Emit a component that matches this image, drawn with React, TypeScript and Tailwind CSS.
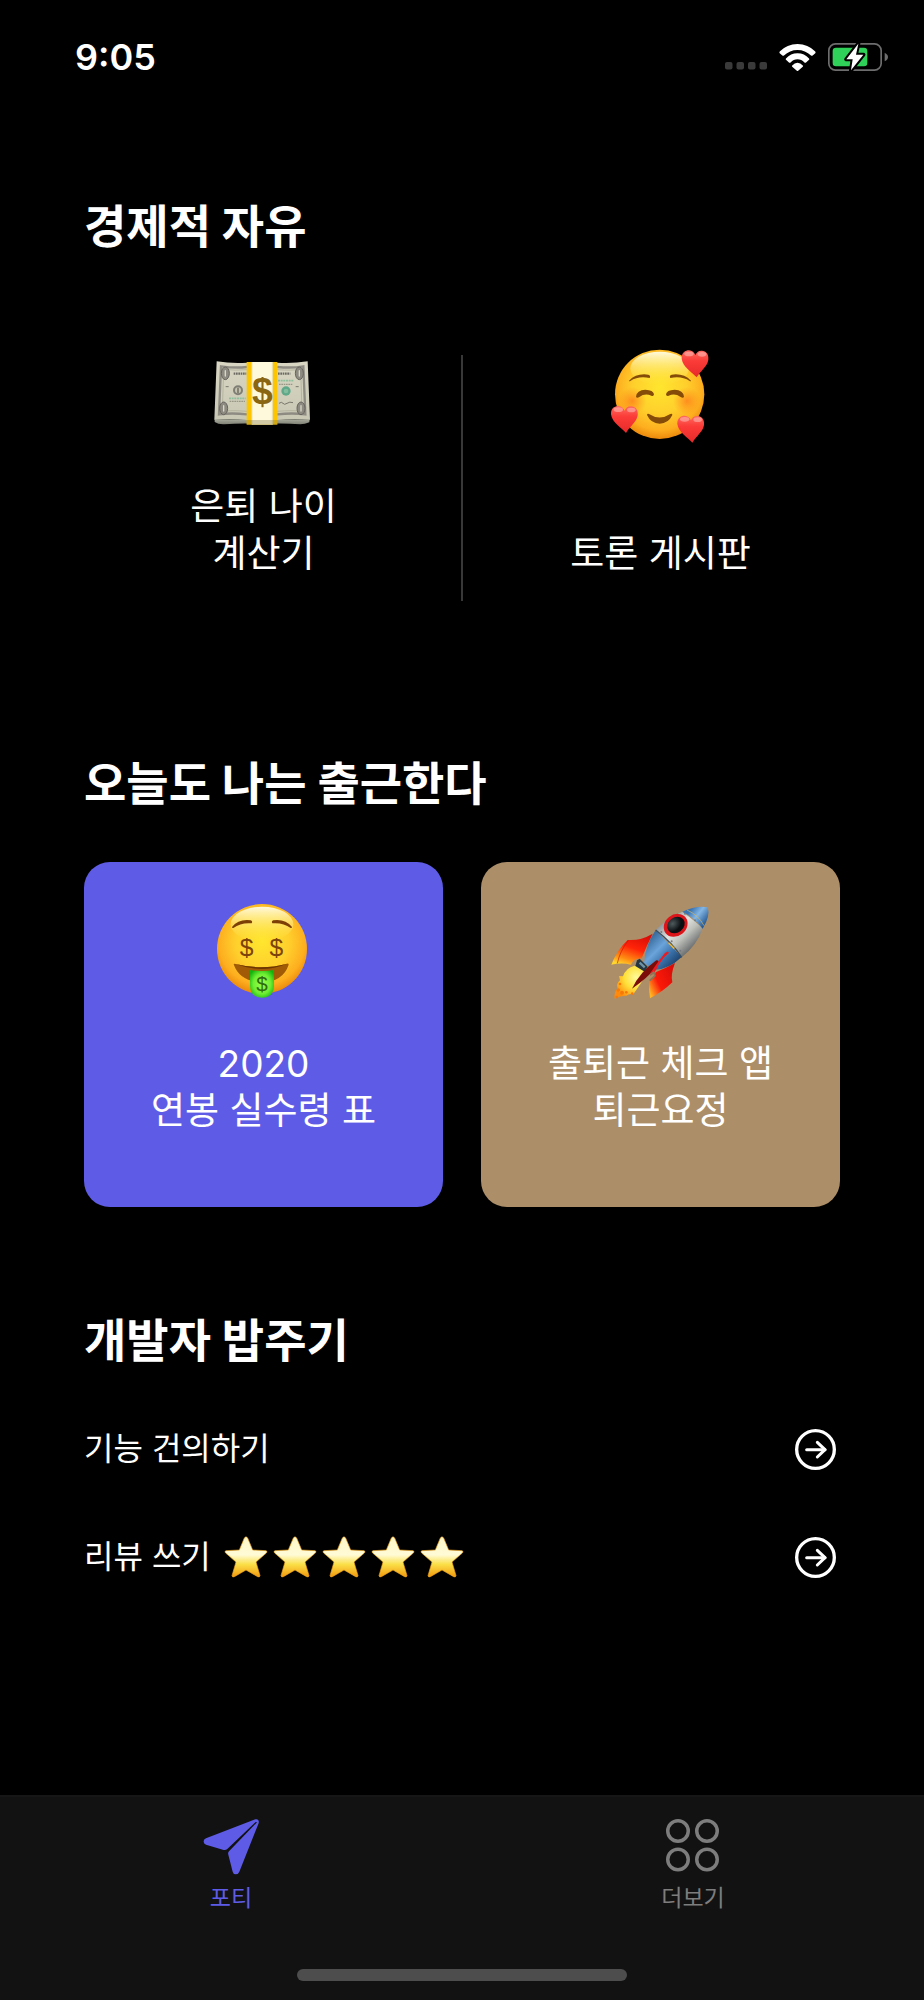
import type { ReactNode } from "react";

function MoneyIcon() {
  return (
    <svg viewBox="27 -18 300 300" className="size-[100px]" aria-hidden="true">
      <defs>
        <linearGradient id="bill" x1="0" y1="0" x2="0" y2="1">
          <stop offset="0" stopColor="#d9d7c4" />
          <stop offset="1" stopColor="#c9c8b5" />
        </linearGradient>
        <linearGradient id="billEdge" x1="0" y1="0" x2="0" y2="1">
          <stop offset="0" stopColor="#a9ab9b" />
          <stop offset="1" stopColor="#7d8074" />
        </linearGradient>
      </defs>
      <path d="M29 208 L314 208 L313 217 Q300 223 286 223 Q230 218 172 222 Q112 218 58 223 Q40 224 29 216 Z" fill="url(#billEdge)" />
      <path d="M35 34 Q80 41 126 38 H217 Q262 41 308 34 L315 209 Q262 205 217 210 H126 Q80 205 28 209 Z" fill="url(#bill)" />
      <path d="M126 51 Q90 55 48 49 L42 193 Q80 188 126 193 M217 51 Q262 55 295 49 L301 193 Q262 188 217 193" fill="none" stroke="#8d8b82" strokeWidth="7" />
      <path d="M126 59 Q90 62 56 58 L52 184 Q80 180 126 184 M217 59 Q262 62 287 58 L291 184 Q262 180 217 184" fill="none" stroke="#b5b49f" strokeWidth="3" />
      <g fill="#8d8b81" stroke="#66645d" strokeWidth="3">
        <ellipse cx="61" cy="70" rx="12" ry="19" />
        <ellipse cx="283" cy="70" rx="12" ry="19" />
        <ellipse cx="56" cy="175" rx="12" ry="19" />
        <ellipse cx="288" cy="175" rx="12" ry="19" />
      </g>
      <g stroke="#d9d7c5" strokeWidth="4" strokeLinecap="round">
        <path d="M61 62V78M283 62V78M56 167V183M288 167V183" />
      </g>
      <path d="M86 71 H124 M219 71 H256" stroke="#6b6962" strokeWidth="7" strokeDasharray="5 2" />
      <path d="M219 92 H267 M72 145 H122" stroke="#8fbf9d" strokeWidth="5" strokeDasharray="6 2" />
      <path d="M222 103 H262 M74 154 H120" stroke="#999887" strokeWidth="4" strokeDasharray="5 2" />
      <path d="M62 110 h9 M272 110 h9 M222 160 q8 -6 12 0 t12 0 t18 -2" stroke="#77766a" strokeWidth="3" fill="none" />
      <circle cx="99" cy="121" r="12" fill="#c5c3ad" stroke="#7f7e75" strokeWidth="6" />
      <path d="M99 113v16" stroke="#77766c" strokeWidth="5" />
      <circle cx="243" cy="123" r="14" fill="#5fa888" />
      <circle cx="243" cy="123" r="7" fill="#82bd9e" />
      <rect x="125" y="36" width="92" height="188" fill="#fdc500" />
      <rect x="141" y="36" width="61" height="188" fill="#fff9dc" />
      <path d="M141 36v188M202 36v188" stroke="#e9e1b4" strokeWidth="3" />
      <path d="M125 210h92v14h-92z" fill="#7b7440" fillOpacity="0.35" />
      <text x="172" y="161" textAnchor="middle" fontSize="112" fontWeight="700" fill="#8a6512" fontFamily="Liberation Sans, sans-serif">$</text>
    </svg>
  );
}

function FaceGradients({ id }: { id: string }) {
  return (
    <defs>
      <radialGradient id={id} cx="0.5" cy="0.42" r="0.6">
        <stop offset="0" stopColor="#ffe62e" />
        <stop offset="0.5" stopColor="#ffcf2c" />
        <stop offset="0.8" stopColor="#fdae1f" />
        <stop offset="1" stopColor="#e88108" />
      </radialGradient>
      <linearGradient id={`${id}Shine`} x1="0" y1="0" x2="0" y2="1">
        <stop offset="0" stopColor="#fffde8" stopOpacity="0.95" />
        <stop offset="1" stopColor="#ffee40" stopOpacity="0" />
      </linearGradient>
    </defs>
  );
}

function Heart({ x, y }: { x: number; y: number }) {
  return (
    <g transform={`translate(${x} ${y})`}>
      <path d="M45 82 C32 66 3 52 0 26 C-1 8 11 1 22 1 C32 1 38 8 41 15 C44 7 51 1 61 2 C73 3 82 12 80 29 C77 49 57 62 45 82Z" fill="url(#heartRed)" />
      <ellipse cx="22" cy="12" rx="14" ry="7" fill="#ffd5d0" fillOpacity="0.45" />
      <ellipse cx="61" cy="13" rx="13" ry="7" fill="#ffd5d0" fillOpacity="0.45" />
    </g>
  );
}

function LoveFaceIcon() {
  return (
    <svg viewBox="212 42 300 300" className="size-[100px]" aria-hidden="true">
      <FaceGradients id="loveFace" />
      <defs>
        <linearGradient id="heartRed" x1="0" y1="0" x2="0" y2="1">
          <stop offset="0" stopColor="#ff6a60" />
          <stop offset="0.4" stopColor="#fb3b37" />
          <stop offset="1" stopColor="#e62a2a" />
        </linearGradient>
        <radialGradient id="blush">
          <stop offset="0" stopColor="#ff7a1a" stopOpacity="0.75" />
          <stop offset="1" stopColor="#ff8a1a" stopOpacity="0" />
        </radialGradient>
      </defs>
      <circle cx="358" cy="193" r="134" fill="url(#loveFace)" />
      <ellipse cx="358" cy="115" rx="88" ry="50" fill="url(#loveFaceShine)" />
      <circle cx="276" cy="213" r="42" fill="url(#blush)" />
      <circle cx="440" cy="213" r="42" fill="url(#blush)" />
      <g fill="#854b08">
        <path d="M266 152 Q288 129 324 134 Q332 137 328 144 Q294 137 270 153 Q267 155 266 152Z" />
        <path d="M452 152 Q430 129 394 134 Q386 137 390 144 Q424 137 448 153 Q451 155 452 152Z" />
        <path d="M287 200 Q289 180 315 179 Q339 180 341 193 Q340 200 333 197 Q314 189 297 201 Q289 206 287 200Z" />
        <path d="M431 200 Q429 180 403 179 Q379 180 377 193 Q378 200 385 197 Q404 189 421 201 Q429 206 431 200Z" />
        <path d="M320 255 Q320 250 326 252 Q358 273 390 252 Q396 250 396 255 Q384 281 358 281 Q332 281 320 255Z" />
      </g>
      <Heart x={424} y={60} />
      <Heart x={212} y={227} />
      <Heart x={411} y={256} />
    </svg>
  );
}

function MoneyFaceIcon() {
  return (
    <svg viewBox="433 483 300 300" className="size-[100px]" aria-hidden="true">
      <FaceGradients id="moneyFace" />
      <defs>
        <radialGradient id="tongue" cx="0.5" cy="0.5" r="0.6">
          <stop offset="0" stopColor="#9bff4a" />
          <stop offset="0.6" stopColor="#6fee34" />
          <stop offset="1" stopColor="#12b40c" />
        </radialGradient>
      </defs>
      <circle cx="577" cy="627" r="135" fill="url(#moneyFace)" />
      <ellipse cx="577" cy="553" rx="94" ry="53" fill="url(#moneyFaceShine)" />
      <path d="M487 561 Q507 536 543 541 Q550 544 546 550 Q514 547 491 564 Q487 565 487 561Z" fill="#7c3f06" />
      <path d="M667 561 Q647 536 611 541 Q604 544 608 550 Q640 547 663 564 Q667 565 667 561Z" fill="#7c3f06" />
      <path d="M492 673 Q493 670 498 672 Q577 692 652 671 Q657 670 657 674 Q640 726 575 726 Q510 725 492 673Z" fill="#a15a05" />
      <path d="M498 672 Q577 692 652 671 Q577 702 498 672Z" fill="#6b3602" />
      <path d="M541 690 Q577 696 613 690 V738 Q611 773 577 773 Q543 773 541 738Z" fill="url(#tongue)" />
      <g textAnchor="middle" fontFamily="Liberation Sans, sans-serif">
        <text x="531" y="647" fontSize="74" fill="#7c430c">$</text>
        <text x="620" y="647" fontSize="74" fill="#7c430c">$</text>
        <text x="577" y="752" fontSize="62" fill="#2f6b10">$</text>
      </g>
    </svg>
  );
}

function RocketIcon() {
  return (
    <svg viewBox="32 18 300 300" className="size-[100px]" aria-hidden="true">
      <defs>
        <linearGradient id="finLeft" x1="0.7" y1="0" x2="0.25" y2="1">
          <stop offset="0" stopColor="#d80d08" />
          <stop offset="0.45" stopColor="#ff2408" />
          <stop offset="0.8" stopColor="#ff8c12" />
          <stop offset="1" stopColor="#ffd52e" />
        </linearGradient>
        <linearGradient id="finRight" x1="0.9" y1="0.2" x2="0" y2="0.8">
          <stop offset="0" stopColor="#dc0d08" />
          <stop offset="0.6" stopColor="#fb1a08" />
          <stop offset="1" stopColor="#ffb424" />
        </linearGradient>
        <linearGradient id="steel" gradientUnits="userSpaceOnUse" x1="200" y1="70" x2="285" y2="160">
          <stop offset="0" stopColor="#8f9498" />
          <stop offset="0.35" stopColor="#e2e4e2" />
          <stop offset="0.6" stopColor="#bfc1bb" />
          <stop offset="1" stopColor="#5c6062" />
        </linearGradient>
        <linearGradient id="blueHull" gradientUnits="userSpaceOnUse" x1="140" y1="140" x2="220" y2="220">
          <stop offset="0" stopColor="#3b6d9f" />
          <stop offset="0.35" stopColor="#6aa4da" />
          <stop offset="0.65" stopColor="#3a71a9" />
          <stop offset="1" stopColor="#173c66" />
        </linearGradient>
        <linearGradient id="noseCone" gradientUnits="userSpaceOnUse" x1="275" y1="40" x2="325" y2="80">
          <stop offset="0" stopColor="#3975b4" />
          <stop offset="0.4" stopColor="#84b6e4" />
          <stop offset="1" stopColor="#1a4f8b" />
        </linearGradient>
        <radialGradient id="flame" cx="0.65" cy="0.35" r="0.7">
          <stop offset="0" stopColor="#fffb9b" />
          <stop offset="0.5" stopColor="#ffe03a" />
          <stop offset="1" stopColor="#ff8a0c" />
        </radialGradient>
        <radialGradient id="porthole" cx="0.4" cy="0.3" r="0.7">
          <stop offset="0" stopColor="#4f5a5d" />
          <stop offset="0.7" stopColor="#0b0f12" />
        </radialGradient>
      </defs>
      <path d="M157 116 Q120 138 82 135 Q50 165 33 209 Q64 202 92 209 Q100 190 124 190 Q140 150 157 116Z" fill="url(#finLeft)" />
      <path d="M84 136 Q58 170 51 205" stroke="#c91706" strokeWidth="2" fill="none" />
      <path d="M224 204 Q210 240 216 262 Q186 291 149 310 Q144 280 147 256 Q164 246 166 232 Q195 220 224 204Z" fill="url(#finRight)" />
      <path d="M103 212 Q76 218 68 244 L56 243 L59 256 Q45 268 52 280 Q40 293 43 311 Q62 301 78 302 Q88 294 99 298 Q118 270 142 234 Q124 216 103 212Z" fill="url(#flame)" />
      <g fill="#f77908">
        <circle cx="54" cy="285" r="5" />
        <circle cx="65" cy="293" r="6" />
        <circle cx="59" cy="267" r="4" />
        <circle cx="78" cy="292" r="4" />
        <circle cx="49" cy="306" r="4" />
        <circle cx="96" cy="296" r="4" />
      </g>
      <path d="M131 205 Q134 151 166 105 L244 186 Q204 224 164 224Z" fill="url(#blueHull)" />
      <path d="M166 105 Q198 70 246 50 Q290 82 307 101 Q290 150 244 187 Q218 148 166 105Z" fill="url(#steel)" />
      <path d="M246 50 Q288 31 322 37 Q331 62 307 101 Q282 68 246 50Z" fill="url(#noseCone)" />
      <path d="M260 45 Q294 60 311 92" stroke="#d9b65a" strokeWidth="2" fill="none" />
      <path d="M166 105 Q216 143 244 187" stroke="#384f61" strokeWidth="4" fill="none" />
      <path d="M205 144 Q214 152 222 161" stroke="#e7b437" strokeWidth="5" fill="none" />
      <ellipse cx="226" cy="91" rx="38" ry="32" transform="rotate(-38 226 91)" fill="#dc151a" />
      <ellipse cx="227" cy="90" rx="28" ry="23" transform="rotate(-38 227 90)" fill="url(#porthole)" />
      <g fill="#777b7d">
        <circle cx="183" cy="111" r="3" />
        <circle cx="214" cy="139" r="3" />
        <circle cx="240" cy="167" r="3" />
        <circle cx="284" cy="76" r="3" />
        <circle cx="254" cy="56" r="3" />
      </g>
      <path d="M110 196 L118 191 L142 215 L133 230 L105 213Z" fill="#263640" />
      <path d="M118 203 L133 217" stroke="#6d93a6" strokeWidth="7" />
      <path d="M95 281 Q118 232 168 196 Q180 196 172 212 Q140 250 95 281Z" fill="#7c0c07" />
      <path d="M202 173 Q178 192 165 222 Q160 234 151 238 Q172 206 196 176Z" fill="#ed1a20" stroke="#ed1a20" strokeWidth="6" strokeLinejoin="round" />
      <path d="M149 240 L160 232 L164 242 L148 257" stroke="#8c7658" strokeWidth="5" fill="none" />
    </svg>
  );
}

function Star() {
  return (
    <svg viewBox="0 0 132 126" className="h-[42px] w-11" aria-hidden="true">
      <defs>
        <linearGradient id="starGold" x1="0" y1="0" x2="0" y2="1">
          <stop offset="0" stopColor="#fff7c8" />
          <stop offset="0.45" stopColor="#fffbd6" />
          <stop offset="0.68" stopColor="#fbe04a" />
          <stop offset="1" stopColor="#f29a0c" />
        </linearGradient>
      </defs>
      <path
        d="M61 6 Q66 -1 71 6 L86 42 L126 44 Q132 46 127 51 L96 78 L108 119 Q107 125 101 122 L66 102 L31 122 Q25 125 24 119 L36 78 L5 51 Q0 46 6 44 L46 42Z"
        fill="url(#starGold)"
        stroke="#f0a420"
        strokeWidth="2"
      />
    </svg>
  );
}

function CircleArrow() {
  return (
    <svg viewBox="0 0 123 123" className="size-[41px]" fill="none" stroke="currentColor" strokeLinecap="round" strokeLinejoin="round" aria-hidden="true">
      <circle cx="61.5" cy="61.5" r="56.5" strokeWidth="10" />
      <path d="M35 62H90" strokeWidth="9" />
      <path d="M67 40L90 62L67 84" strokeWidth="9" />
    </svg>
  );
}

function PlaneIcon() {
  return (
    <svg viewBox="0 0 168 168" className="size-14" fill="currentColor" aria-hidden="true">
      <path d="M157 1 Q163 -1 166 4 Q169 8 166 15 L109 158 Q106 166 98 166 Q91 166 89 158 L76 107 Q74 102 78 97 L161 11 Q162 8 158 9 L72 91 Q68 94 62 93 L9 77 Q2 74 2 68 Q1 61 9 58 Z" />
    </svg>
  );
}

function GridIcon() {
  return (
    <svg viewBox="0 0 54 54" className="size-[54px]" fill="none" stroke="currentColor" strokeWidth="3.5" aria-hidden="true">
      <circle cx="12" cy="12" r="10.25" />
      <circle cx="41" cy="12" r="10.25" />
      <circle cx="12" cy="40.5" r="10.25" />
      <circle cx="41" cy="40.5" r="10.25" />
    </svg>
  );
}

function StatusBar() {
  return (
    <header className="flex h-[114px] items-center justify-between pr-9 pl-[75px]">
      <time className="text-4xl font-semibold">9:05</time>
      <div className="flex items-center gap-3">
        <svg viewBox="0 0 42 28" className="h-7 w-[42px]" fill="#3a3a3a" aria-hidden="true">
          <rect x="0" y="19" width="7.5" height="7.5" rx="2" />
          <rect x="11.5" y="19" width="7.5" height="7.5" rx="2" />
          <rect x="23" y="19" width="7.5" height="7.5" rx="2" />
          <rect x="34.5" y="19" width="7.5" height="7.5" rx="2" />
        </svg>
        <svg viewBox="0 0 112 82" className="h-[27px] w-[37px]" fill="#fff" aria-label="Wi-Fi" role="img">
          <path d="M2 23 Q24 0 56 0 Q88 0 110 23 Q112 26 110 28 L102 35 Q99 37 97 35 Q80 18 56 18 Q32 18 15 35 Q13 37 10 35 L2 28 Q0 26 2 23Z" />
          <path d="M21 44 Q35 28 56 28 Q77 28 91 44 Q93 46 91 48 L82 56 Q80 58 77 56 Q68 46 56 46 Q44 46 35 56 Q32 58 30 56 L21 48 Q19 46 21 44Z" />
          <path d="M40 65 Q47 57 56 57 Q65 57 72 65 Q74 67 72 69 L58 81 Q56 83 54 81 L40 69 Q38 67 40 65Z" />
        </svg>
        <svg viewBox="0 0 180 84" className="h-7 w-[60px]" role="img" aria-label="충전 중">
          <rect x="2.5" y="2.5" width="157" height="79" rx="20" fill="none" stroke="#6d6d6d" strokeWidth="5" />
          <path d="M170 29 Q180 34 180 42 Q180 50 170 55Z" fill="#6d6d6d" />
          <rect x="14" y="14" width="104" height="56" rx="10" fill="#30d158" />
          <path d="M91 2 L55 49 H74 L69 82 L106 35 H84Z" fill="#fff" stroke="#000" strokeWidth="12" strokeLinejoin="round" paintOrder="stroke" />
        </svg>
      </div>
    </header>
  );
}

function Section({ title, children }: { title: string; children: ReactNode }) {
  return (
    <section>
      <h2 className="text-[46px] leading-[56px] font-bold">{title}</h2>
      {children}
    </section>
  );
}

function Tile({ icon, lines, tone = "" }: { icon: ReactNode; lines: string[]; tone?: string }) {
  return (
    <button type="button" className={`flex flex-1 flex-col items-center rounded-[26px] pt-[39px] pb-[73px] ${tone}`}>
      {icon}
      <span className="mt-[39px] flex min-h-[94px] flex-col justify-end text-[37px] leading-[47px] font-[380]">
        {lines.map((line) => (
          <span key={line}>{line}</span>
        ))}
      </span>
    </button>
  );
}

function Row({ children }: { children: ReactNode }) {
  return (
    <li>
      <a href="#" className="flex h-[108px] items-center justify-between pr-1 text-[32px] leading-[40px] font-[380]">
        <span className="flex items-center gap-[13px]">{children}</span>
        <CircleArrow />
      </a>
    </li>
  );
}

export default function App() {
  return (
    <div className="flex min-h-screen flex-col bg-black font-['Inter','Noto_Sans_CJK_KR',sans-serif] text-white">
      <StatusBar />
      <main className="flex flex-1 flex-col gap-[105px] px-[84px] pt-[84px] pb-16">
        <Section title="경제적 자유">
          <div className="mt-[51px] flex">
            <Tile icon={<MoneyIcon />} lines={["은퇴 나이", "계산기"]} />
            <div className="flex w-[38px] items-center justify-center">
              <div className="h-[246px] w-[2px] bg-[#383838]" />
            </div>
            <Tile icon={<LoveFaceIcon />} lines={["토론 게시판"]} />
          </div>
        </Section>
        <Section title="오늘도 나는 출근한다">
          <div className="mt-[51px] flex gap-[38px]">
            <Tile icon={<MoneyFaceIcon />} lines={["2020", "연봉 실수령 표"]} tone="bg-[#5e5ce6]" />
            <Tile icon={<RocketIcon />} lines={["출퇴근 체크 앱", "퇴근요정"]} tone="bg-[#ac8e68]" />
          </div>
        </Section>
        <Section title="개발자 밥주기">
          <ul className="mt-[27px]">
            <Row>기능 건의하기</Row>
            <Row>
              리뷰 쓰기
              <span className="flex gap-[5px]" role="img" aria-label="별 다섯 개">
                <Star />
                <Star />
                <Star />
                <Star />
                <Star />
              </span>
            </Row>
          </ul>
        </Section>
      </main>
      <nav className="border-t-2 border-[#161616] bg-[#121212] pb-[19px]">
        <div className="grid grid-cols-2 text-[23px] leading-[30px]">
          <a href="#" aria-current="page" className="flex flex-col items-center gap-2 pt-[22px] text-[#5e5ce6]">
            <PlaneIcon />
            포티
          </a>
          <a href="#" className="flex flex-col items-center gap-[10px] pt-[22px] text-[#7d7d7d]">
            <GridIcon />
            더보기
          </a>
        </div>
        <div className="mx-auto mt-14 h-3 w-[330px] rounded-full bg-[#4d4d4d]" />
      </nav>
    </div>
  );
}
